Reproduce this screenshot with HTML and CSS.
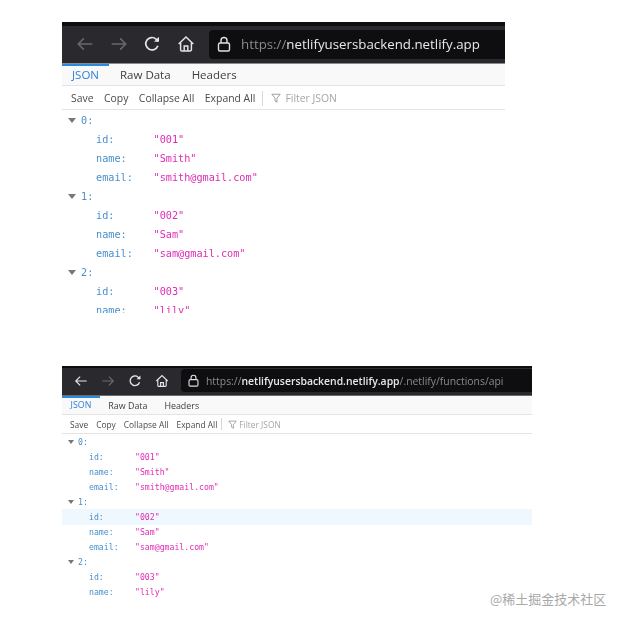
FILE: index.html
```html
<!DOCTYPE html>
<html lang="en">
<head>
<meta charset="utf-8">
<title>JSON viewer</title>
<link rel="stylesheet" href="styles.css">
</head>
<body>
<svg class="defs" width="0" height="0" aria-hidden="true">
  <symbol id="i-back" viewBox="0 0 16 16"><path d="M14.5 8H2M7 3 2 8l5 5" fill="none" stroke="currentColor" stroke-width="1.3"/></symbol>
  <symbol id="i-fwd" viewBox="0 0 16 16"><path d="M1.5 8H14M9 3l5 5-5 5" fill="none" stroke="currentColor" stroke-width="1.3"/></symbol>
  <symbol id="i-reload" viewBox="0 0 16 16"><path d="M13.2 9.5A5.5 5.5 0 1 1 11.6 3.6L13.6 5.4" fill="none" stroke="currentColor" stroke-width="1.5"/><path d="M14.2 1.6V6H9.8z" fill="currentColor"/></symbol>
  <symbol id="i-home" viewBox="0 0 16 16"><path d="M1.5 8 8 1.8 14.5 8M3.2 6.8V13a1.2 1.2 0 0 0 1.2 1.2h7.2a1.2 1.2 0 0 0 1.2-1.2V6.8M6.4 14V9.8h3.2V14" fill="none" stroke="currentColor" stroke-width="1.3"/></symbol>
  <symbol id="i-lock" viewBox="0 0 16 16"><rect x="2.5" y="7" width="11" height="8" rx="1.5" fill="none" stroke="currentColor" stroke-width="1.4"/><path d="M5 7V4.5a3 3 0 0 1 6 0V7" fill="none" stroke="currentColor" stroke-width="1.4"/></symbol>
  <symbol id="i-filter" viewBox="0 0 12 12"><path d="M1 1.5h10L7.2 6.2V11L4.8 9.6V6.2z" fill="none" stroke="currentColor" stroke-width="1"/></symbol>
</svg>

<section class="panel panel-a">
  <header class="chrome">
    <svg class="nav dim"><use href="#i-back"/></svg>
    <svg class="nav dim"><use href="#i-fwd"/></svg>
    <svg class="nav"><use href="#i-reload"/></svg>
    <svg class="nav"><use href="#i-home"/></svg>
    <div class="url">
      <svg class="lock"><use href="#i-lock"/></svg>
      <span class="url-text"><span class="url-dim">https://</span><b>netlifyusersbackend.netlify.app</b></span>
    </div>
  </header>
  <nav class="tabs"><span class="tab active">JSON</span><span class="tab">Raw Data</span><span class="tab">Headers</span></nav>
  <div class="tools">
    <span>Save</span><span>Copy</span><span>Collapse All</span><span>Expand All</span>
    <i class="sep"></i>
    <span class="filter"><svg class="filter-icon"><use href="#i-filter"/></svg>Filter JSON</span>
  </div>
  <div class="tree">
    <div class="row head"><i class="tri"></i><span class="key">0:</span></div>
    <div class="row"><span class="key">id:</span><span class="val">"001"</span></div>
    <div class="row"><span class="key">name:</span><span class="val">"Smith"</span></div>
    <div class="row"><span class="key">email:</span><span class="val">"smith@gmail.com"</span></div>
    <div class="row head"><i class="tri"></i><span class="key">1:</span></div>
    <div class="row"><span class="key">id:</span><span class="val">"002"</span></div>
    <div class="row"><span class="key">name:</span><span class="val">"Sam"</span></div>
    <div class="row"><span class="key">email:</span><span class="val">"sam@gmail.com"</span></div>
    <div class="row head"><i class="tri"></i><span class="key">2:</span></div>
    <div class="row"><span class="key">id:</span><span class="val">"003"</span></div>
    <div class="row"><span class="key">name:</span><span class="val">"lily"</span></div>
  </div>
</section>

<section class="panel panel-b">
  <header class="chrome">
    <svg class="nav"><use href="#i-back"/></svg>
    <svg class="nav dim"><use href="#i-fwd"/></svg>
    <svg class="nav"><use href="#i-reload"/></svg>
    <svg class="nav"><use href="#i-home"/></svg>
    <div class="url">
      <svg class="lock"><use href="#i-lock"/></svg>
      <span class="url-text"><span class="url-dim">https://</span><b>netlifyusersbackend.netlify.app</b><span class="url-dim">/.netlify/functions/api</span></span>
    </div>
  </header>
  <nav class="tabs"><span class="tab active">JSON</span><span class="tab">Raw Data</span><span class="tab">Headers</span></nav>
  <div class="tools">
    <span>Save</span><span>Copy</span><span>Collapse All</span><span>Expand All</span>
    <i class="sep"></i>
    <span class="filter"><svg class="filter-icon"><use href="#i-filter"/></svg>Filter JSON</span>
  </div>
  <div class="tree">
    <div class="row head"><i class="tri"></i><span class="key">0:</span></div>
    <div class="row"><span class="key">id:</span><span class="val">"001"</span></div>
    <div class="row"><span class="key">name:</span><span class="val">"Smith"</span></div>
    <div class="row"><span class="key">email:</span><span class="val">"smith@gmail.com"</span></div>
    <div class="row head"><i class="tri"></i><span class="key">1:</span></div>
    <div class="row hover"><span class="key">id:</span><span class="val">"002"</span></div>
    <div class="row"><span class="key">name:</span><span class="val">"Sam"</span></div>
    <div class="row"><span class="key">email:</span><span class="val">"sam@gmail.com"</span></div>
    <div class="row head"><i class="tri"></i><span class="key">2:</span></div>
    <div class="row"><span class="key">id:</span><span class="val">"003"</span></div>
    <div class="row"><span class="key">name:</span><span class="val">"lily"</span></div>
  </div>
</section>

<div class="watermark">@稀土掘金技术社区</div>
</body>
</html>
```
FILE: styles.css
```css
* { box-sizing: border-box; }
html, body { margin: 0; height: 100%; background: #fff; }
body {
  position: relative;
  padding: 22px 0 0 62px;
  overflow: hidden;
  font-family: "Open Sans", "Noto Sans", sans-serif;
}
.defs { position: absolute; }
.panel { overflow: hidden; filter: blur(0.5px); background: #fff; }

/* browser chrome */
.chrome {
  display: flex;
  align-items: center;
  background: linear-gradient(#0e0e10 0 4px, #2a2a2e 4px);
  color: #e6e6e8;
}
.nav { flex: none; display: block; }
.nav.dim { color: #6a6a6e; }
.url {
  display: flex;
  align-items: center;
  flex: 1;
  min-width: 0;
  background: #0e0e10;
  border-radius: 4px 0 0 4px;
  white-space: nowrap;
  overflow: hidden;
}
.lock { flex: none; display: block; color: #e0e0e2; }
.url-dim { color: #8a8a8e; }
.url-text b { font-weight: 600; color: #e8e8ea; }

/* tabs */
.tabs { display: flex; align-items: center; background: #f9f9fa; border-bottom: 1px solid #e4e4e6; color: #3d3d42; }
.tab { display: block; }
.tab.active { color: #2f7fd6; border-top: 2px solid #2a8ae0; }

/* toolbar */
.tools { display: flex; align-items: center; background: #fff; border-bottom: 1px solid #e4e4e6; color: #4a4a4f; }
.sep { display: block; width: 1px; background: #d8d8da; }
.filter { display: flex; align-items: center; color: #a5a5a9; }
.filter-icon { display: block; color: #8c8c90; flex: none; }

/* tree */
.tree { font-family: "DejaVu Sans Mono", "Liberation Mono", monospace; background: #fff; }
.row { display: grid; align-items: center; white-space: pre; }
.row.head { display: flex; }
.row.hover { background: #eff8ff; }
.key { color: #4a8fcb; }
.val { color: #e02cb4; }
.tri {
  display: block;
  width: 0; height: 0;
  border-left: 4px solid transparent;
  border-right: 4px solid transparent;
  border-top: 5px solid #77777b;
}

/* first capture */
.panel-a { width: 443px; height: 291px; }
.panel-a .chrome { height: 42px; padding: 3px 0 0 14px; gap: 15.5px; border-bottom: 1px solid #8a8a8c; }
.panel-a .nav { width: 18px; height: 18px; }
.panel-a .url { height: 29px; margin-left: -1px; padding-left: 7px; gap: 9px; font-size: 13.3px; }
.panel-a .url-text b { font-weight: 500; }
.panel-a .lock { width: 16px; height: 16px; }
.panel-a .tabs { height: 22px; font-size: 11.5px; gap: 1px; }
.panel-a .tab { padding: 0 10px; }
.panel-a .tab.active { height: 22px; line-height: 18px; }
.panel-a .tools { height: 24px; padding: 1px 0 0 9px; gap: 10.5px; font-size: 10.4px; }
.panel-a .sep { height: 15px; margin: 0 -2px 0 -4px; }
.panel-a .filter { gap: 4px; font-size: 10.4px; }
.panel-a .filter-icon { width: 10px; height: 10px; }
.panel-a .tree { padding-top: 1px; }
.panel-a .row { height: 19px; grid-template-columns: 57.5px 1fr; padding-left: 34px; font-size: 10.2px; }
.panel-a .row.head { padding-left: 6px; gap: 5px; }

/* second capture */
.panel-b { width: 470px; margin-top: 53px; height: 236px; }
.panel-b .chrome { height: 30px; padding: 0 0 0 12px; gap: 13px; border-bottom: 1px solid #6a6a6c; background: linear-gradient(#0e0e10 0 2px, #2a2a2e 2px); }
.panel-b .nav { width: 14px; height: 14px; }
.panel-b .url { height: 23px; margin-left: -1px; padding-left: 6px; gap: 6px; font-size: 10.4px; }
.panel-b .lock { width: 13px; height: 13px; }
.panel-b .tabs { height: 19px; font-size: 8.9px; }
.panel-b .tab { padding: 0 8.5px; }
.panel-b .tab.active { height: 18px; line-height: 14px; }
.panel-b .tools { height: 19px; padding-left: 8px; gap: 8px; font-size: 8.4px; }
.panel-b .sep { height: 12px; margin: 0 -2px 0 -4px; }
.panel-b .filter { gap: 2px; font-size: 8.4px; }
.panel-b .filter-icon { width: 9px; height: 9px; }
.panel-b .row { height: 15.1px; grid-template-columns: 46px 1fr; padding-left: 27px; font-size: 8.2px; }
.panel-b .row.head { padding-left: 6px; gap: 4px; }
.panel-b .tri { border-left-width: 3.5px; border-right-width: 3.5px; border-top-width: 4px; }

.watermark {
  position: absolute;
  left: 490px;
  top: 591px;
  font-family: "Noto Sans CJK SC", sans-serif;
  font-size: 13px;
  line-height: 16px;
  color: #a8a8a8;
  white-space: nowrap;
}
```
